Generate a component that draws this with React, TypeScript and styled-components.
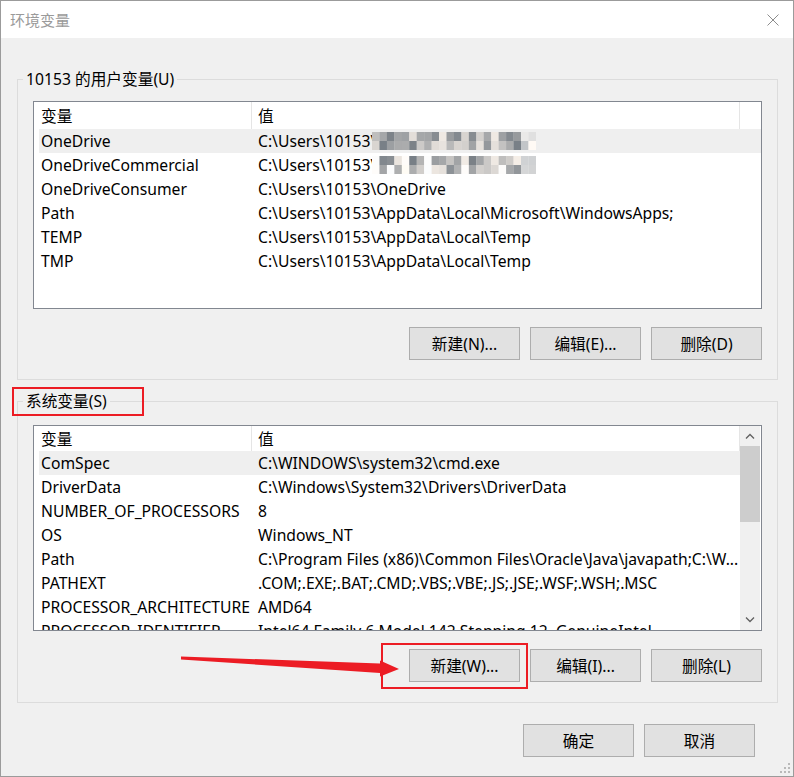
import React from "react";
import styled, { createGlobalStyle } from "styled-components";

const GlobalStyle = createGlobalStyle`
  html, body {
    margin: 0;
    padding: 0;
    background: #fff;
  }
  body {
    font-family: "Noto Sans", "Noto Sans CJK SC", sans-serif;
    font-size: 15.7px;
    color: #000;
  }
`;

const Stage = styled.div`
  position: relative;
  width: 794px;
  height: 777px;
  overflow: hidden;
`;

const Window = styled.div`
  position: relative;
  box-sizing: border-box;
  width: 794px;
  height: 777px;
  border: 1px solid #9b9b9b;
  background: #f0f0f0;
  display: flex;
  flex-direction: column;
`;

const TitleBar = styled.div`
  height: 37px;
  flex: none;
  background: #fff;
  display: flex;
  align-items: center;
  justify-content: space-between;
  padding: 0 14px 0 9px;
  font-family: "Noto Sans CJK SC", sans-serif;
  font-size: 15px;
  color: #9a9a9a;
`;

const Body = styled.div`
  display: flex;
  flex-direction: column;
  padding: 41px 15px 0 16px;
`;

const Group = styled.div<{ $gap: number; $bottom: number; $top?: number }>`
  display: flex;
  flex-direction: column;
  border: 1px solid #dcdcdc;
  padding: 0 15px ${(p) => p.$bottom}px 15px;
  margin-top: ${(p) => p.$top ?? 0}px;
  & > div:nth-child(2) {
    margin-top: ${(p) => p.$gap}px;
  }
`;

const Legend = styled.span`
  align-self: flex-start;
  margin: -11px 0 0 -10px;
  padding: 0 3px;
  height: 20px;
  line-height: 20px;
  background: #f0f0f0;
`;

const ListBox = styled.div<{ $height: number }>`
  box-sizing: border-box;
  width: 729px;
  height: ${(p) => p.$height}px;
  border: 1px solid #828790;
  background: #fff;
  display: flex;
  overflow: hidden;
`;

const ListContent = styled.div`
  flex: 1;
  padding-left: 5px;
  overflow: hidden;
`;

const HeaderRow = styled.div<{ $h: number }>`
  display: grid;
  grid-template-columns: 213px 488px;
  height: ${(p) => p.$h}px;
`;

const HeaderCell = styled.div<{ $first?: boolean }>`
  display: flex;
  align-items: center;
  border-right: 1px solid #e5e5e5;
  padding-left: ${(p) => (p.$first ? 2 : 6)}px;
  padding-bottom: 1px;
`;

const DataRow = styled.div<{ $active?: boolean }>`
  display: grid;
  grid-template-columns: 213px 488px;
  height: 24px;
  line-height: 24px;
  background: ${(p) => (p.$active ? "#efefef" : "transparent")};
`;

const Cell = styled.div<{ $first?: boolean }>`
  display: flex;
  align-items: center;
  padding-left: ${(p) => (p.$first ? 2 : 6)}px;
  white-space: nowrap;
  overflow: hidden;
`;

const Scrollbar = styled.div`
  width: 20px;
  margin-right: 1px;
  background: #f0f0f0;
  display: flex;
  flex-direction: column;
`;

const ScrollArrow = styled.div`
  height: 20px;
  display: flex;
  align-items: center;
  justify-content: center;
`;

const Thumb = styled.div`
  height: 76px;
  background: #cdcdcd;
`;

const Track = styled.div`
  flex: 1;
`;

const ButtonRow = styled.div<{ $top: number }>`
  display: flex;
  justify-content: flex-end;
  gap: 10px;
  margin-top: ${(p) => p.$top}px;
`;

const Button = styled.button`
  box-sizing: border-box;
  width: 111px;
  height: 33px;
  padding: 0;
  border: 1px solid #adadad;
  background: #e1e1e1;
  font: inherit;
  color: #000;
`;

const Footer = styled.div`
  display: flex;
  justify-content: flex-end;
  gap: 10px;
  margin-top: 21px;
  padding-right: 23px;
`;

const Grip = styled.svg`
  position: absolute;
  right: 2px;
  bottom: 2px;
`;

const Annotations = styled.svg`
  position: absolute;
  left: 0;
  top: 0;
  pointer-events: none;
`;

type Row = { name: string; value: string; masked?: number };

const userVars: Row[] = [
  { name: "OneDrive", value: "C:\\Users\\10153\\", masked: 1 },
  { name: "OneDriveCommercial", value: "C:\\Users\\10153\\", masked: 2 },
  { name: "OneDriveConsumer", value: "C:\\Users\\10153\\OneDrive" },
  { name: "Path", value: "C:\\Users\\10153\\AppData\\Local\\Microsoft\\WindowsApps;" },
  { name: "TEMP", value: "C:\\Users\\10153\\AppData\\Local\\Temp" },
  { name: "TMP", value: "C:\\Users\\10153\\AppData\\Local\\Temp" },
];

const systemVars: Row[] = [
  { name: "ComSpec", value: "C:\\WINDOWS\\system32\\cmd.exe" },
  { name: "DriverData", value: "C:\\Windows\\System32\\Drivers\\DriverData" },
  { name: "NUMBER_OF_PROCESSORS", value: "8" },
  { name: "OS", value: "Windows_NT" },
  { name: "Path", value: "C:\\Program Files (x86)\\Common Files\\Oracle\\Java\\javapath;C:\\W..." },
  { name: "PATHEXT", value: ".COM;.EXE;.BAT;.CMD;.VBS;.VBE;.JS;.JSE;.WSF;.WSH;.MSC" },
  { name: "PROCESSOR_ARCHITECTURE", value: "AMD64" },
  { name: "PROCESSOR_IDENTIFIER", value: "Intel64 Family 6 Model 142 Stepping 12, GenuineIntel" },
];

// pixelated blur that hides part of the user path
const Mosaic = ({ seed }: { seed: number }) => {
  const cols = 22;
  const w = 7.45;
  const cells = [];
  for (let r = 0; r < 2; r++) {
    for (let c = 0; c < cols; c++) {
      const n = Math.abs(Math.sin((c + 1) * 12.9898 + (r + 1) * 78.233 + seed * 37.719) * 43758.5453) % 1;
      let g = Math.round(125 + n * 115);
      if (c >= cols - 2) g = Math.min(250, g + 40);
      if (seed === 2 && (c === 0 || c === 4 || c === 7 || (r === 1 && c % 5 === 2))) g = 252;
      const tint = Math.round((n - 0.5) * 14);
      const fill = `rgb(${g + tint}, ${g}, ${g - tint})`;
      cells.push(<rect key={`${r}-${c}`} x={c * w} y={r * 9} width={w + 0.2} height={9.2} fill={fill} />);
    }
  }
  return (
    <svg width={164} height={18} style={{ marginLeft: -4 }}>
      {cells}
    </svg>
  );
};

const Chevron = ({ up }: { up?: boolean }) => (
  <svg width="10" height="6" viewBox="0 0 10 6">
    <path d={up ? "M1 5.5 L5 1.5 L9 5.5" : "M1 0.5 L5 4.5 L9 0.5"} fill="none" stroke="#606060" strokeWidth="1.3" />
  </svg>
);

const VarList = ({
  rows,
  height,
  headerHeight,
  scroll,
}: {
  rows: Row[];
  height: number;
  headerHeight: number;
  scroll?: boolean;
}) => (
  <ListBox $height={height}>
    <ListContent>
      <HeaderRow $h={headerHeight}>
        <HeaderCell $first>变量</HeaderCell>
        <HeaderCell>值</HeaderCell>
      </HeaderRow>
      {rows.map((r, i) => (
        <DataRow key={r.name + i} $active={i === 0}>
          <Cell $first>{r.name}</Cell>
          <Cell>
            {r.value}
            {r.masked ? <Mosaic seed={r.masked} /> : null}
          </Cell>
        </DataRow>
      ))}
    </ListContent>
    {scroll ? (
      <Scrollbar>
        <ScrollArrow>
          <Chevron up />
        </ScrollArrow>
        <Thumb />
        <Track />
        <ScrollArrow>
          <Chevron />
        </ScrollArrow>
      </Scrollbar>
    ) : null}
  </ListBox>
);

export default function App() {
  return (
    <Stage>
      <GlobalStyle />
      <Window>
        <TitleBar>
          <span>环境变量</span>
          <svg width="12" height="12" viewBox="0 0 12 12">
            <path d="M0.5 0.5 L11.5 11.5 M11.5 0.5 L0.5 11.5" stroke="#8c8c8c" strokeWidth="1" />
          </svg>
        </TitleBar>
        <Body>
          <Group $gap={12} $bottom={19}>
            <Legend>10153 的用户变量(U)</Legend>
            <VarList rows={userVars} height={208} headerHeight={27} />
            <ButtonRow $top={18}>
              <Button>新建(N)...</Button>
              <Button>编辑(E)...</Button>
              <Button>删除(D)</Button>
            </ButtonRow>
          </Group>
          <Group $gap={14} $bottom={20} $top={21}>
            <Legend>系统变量(S)</Legend>
            <VarList rows={systemVars} height={206} headerHeight={25} scroll />
            <ButtonRow $top={18}>
              <Button>新建(W)...</Button>
              <Button>编辑(I)...</Button>
              <Button>删除(L)</Button>
            </ButtonRow>
          </Group>
          <Footer>
            <Button>确定</Button>
            <Button>取消</Button>
          </Footer>
        </Body>
        <Grip width="12" height="12" viewBox="0 0 12 12">
          {[
            [9, 1],
            [5, 5],
            [9, 5],
            [1, 9],
            [5, 9],
            [9, 9],
          ].map(([x, y]) => (
            <rect key={`${x}-${y}`} x={x} y={y} width="2" height="2" fill="#b9b9b9" />
          ))}
        </Grip>
      </Window>
      <Annotations width="794" height="777" viewBox="0 0 794 777">
        <rect x="13" y="388" width="130" height="27" fill="none" stroke="#ec1c24" strokeWidth="2" />
        <rect x="382" y="644" width="145" height="44" fill="none" stroke="#ec1c24" strokeWidth="2" />
        <polygon
          points="181,656.5 380,663.5 380,660.5 399,669 380,676.5 380,673 181,659.5"
          fill="#ec1c24"
        />
      </Annotations>
    </Stage>
  );
}
